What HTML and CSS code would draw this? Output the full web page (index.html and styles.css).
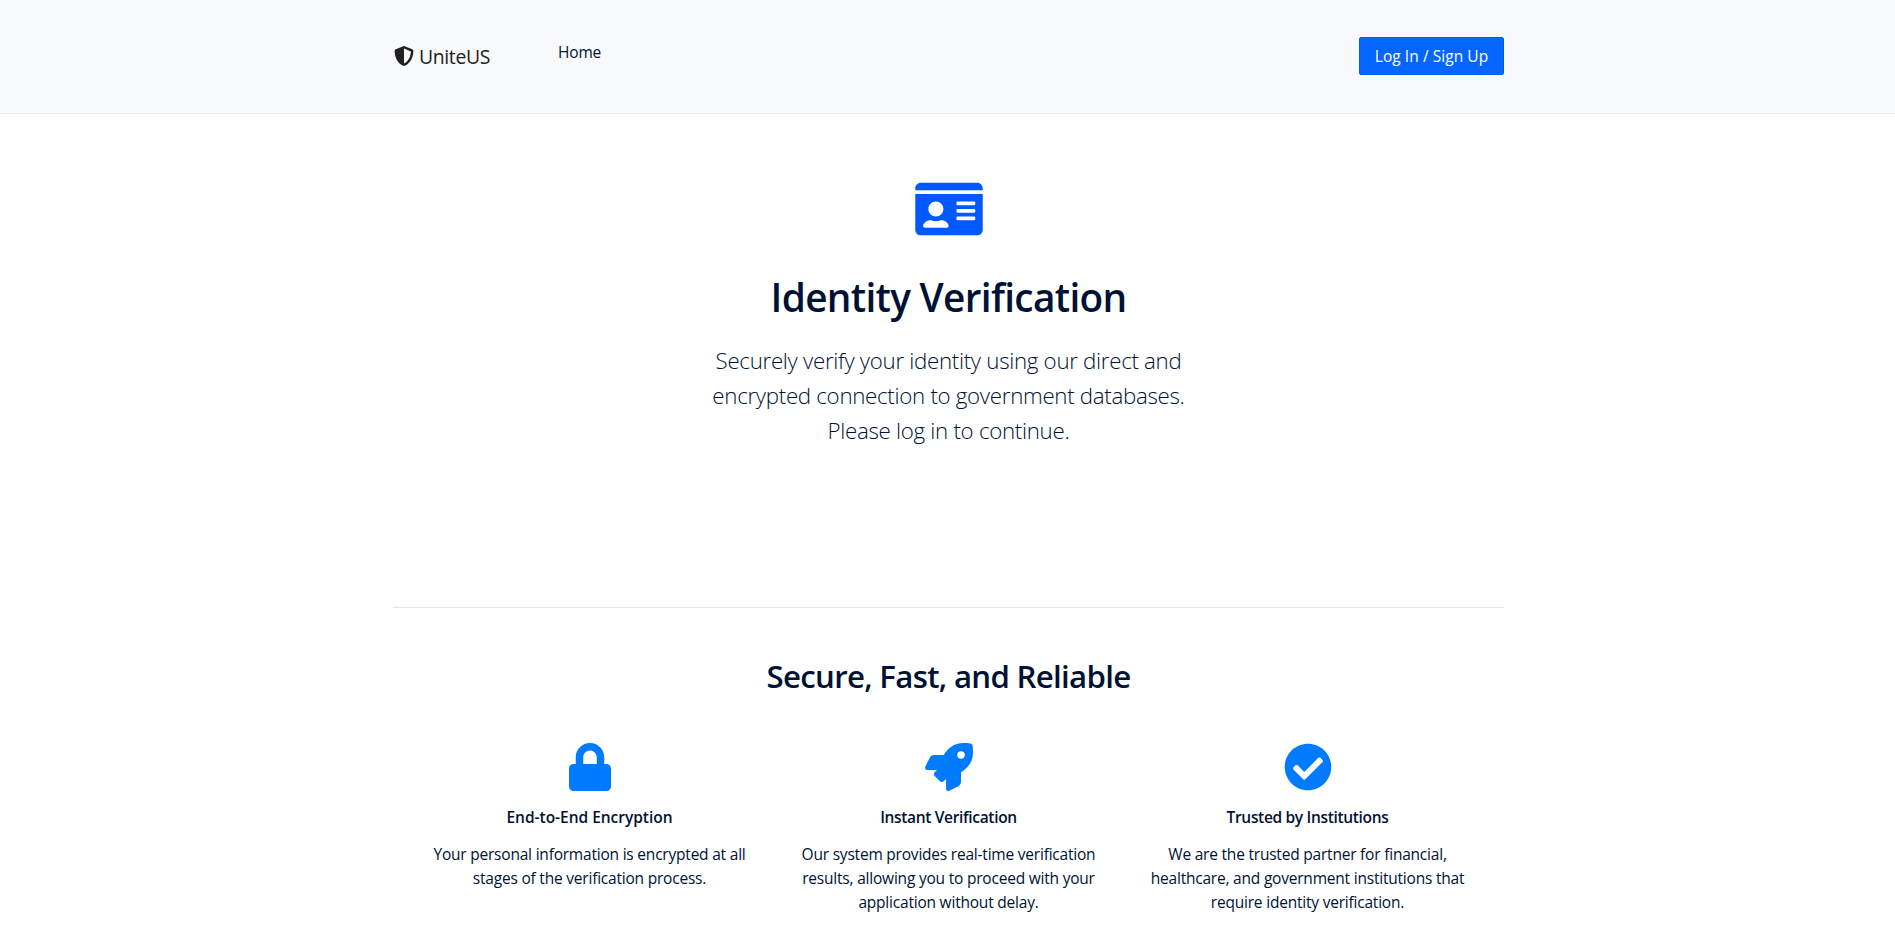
FILE: index.html
```html
<!DOCTYPE html>
<html lang="en">
<head>
    <meta charset="UTF-8">
    <meta name="viewport" content="width=device-width, initial-scale=1.0">
    <title>UniteUS - Identity Verification</title>
    <link rel="stylesheet" href="styles.css">
</head>
<body>
    <!-- Navigation -->
    <header class="header">
        <nav class="container navbar">
            <a class="brand" href="#">
                <svg class="brand-icon" viewBox="0 0 512 512"><path d="M466.5 83.7l-192-80a48.15 48.15 0 0 0-36.9 0l-192 80C27.7 91.1 16 108.6 16 128c0 198.5 114.5 335.7 221.5 380.3 11.8 4.9 25.1 4.9 36.9 0C360.1 472.6 496 349.3 496 128c0-19.4-11.7-36.9-29.5-44.3zM256.1 446.3l-.1-381 175.9 73.3c-3.3 151.4-82.1 261.1-175.8 307.7z"/></svg>
                <span class="brand-name">UniteUS</span>
            </a>
            <a class="nav-link" href="#">Home</a>
            <a class="btn-login" href="#">Log In / Sign Up</a>
        </nav>
    </header>

    <main class="container">
        <!-- Hero -->
        <section class="hero">
            <svg class="hero-icon" viewBox="0 0 576 512"><path d="M528 32H48C21.5 32 0 53.5 0 80v16h576V80c0-26.5-21.5-48-48-48zM0 432c0 26.5 21.5 48 48 48h480c26.5 0 48-21.5 48-48V128H0v304zm352-232c0-4.4 3.6-8 8-8h144c4.4 0 8 3.6 8 8v16c0 4.4-3.6 8-8 8H360c-4.4 0-8-3.6-8-8v-16zm0 64c0-4.4 3.6-8 8-8h144c4.4 0 8 3.6 8 8v16c0 4.4-3.6 8-8 8H360c-4.4 0-8-3.6-8-8v-16zm0 64c0-4.4 3.6-8 8-8h144c4.4 0 8 3.6 8 8v16c0 4.4-3.6 8-8 8H360c-4.4 0-8-3.6-8-8v-16zM176 192c35.3 0 64 28.7 64 64s-28.7 64-64 64-64-28.7-64-64 28.7-64 64-64zM67.1 396.2C75.5 370.5 99.6 352 128 352h8.2c12.3 5.1 25.7 8 39.8 8s27.6-2.9 39.8-8h8.2c28.4 0 52.5 18.5 60.9 44.2 3.2 9.9-5.2 19.8-15.6 19.8H82.7c-10.4 0-18.8-10-15.6-19.8z"/></svg>
            <h1>Identity Verification</h1>
            <p class="lead">
                Securely verify your identity using our direct and<br>
                encrypted connection to government databases.<br>
                Please log in to continue.
            </p>
        </section>

        <!-- Features -->
        <section class="features">
            <h2>Secure, Fast, and Reliable</h2>
            <div class="feature-row">
                <div class="feature">
                    <svg class="feature-icon" viewBox="0 0 448 512"><path d="M400 224h-24v-72C376 68.2 307.8 0 224 0S72 68.2 72 152v72H48c-26.5 0-48 21.5-48 48v192c0 26.5 21.5 48 48 48h352c26.5 0 48-21.5 48-48V272c0-26.5-21.5-48-48-48zm-104 0H152v-72c0-39.7 32.3-72 72-72s72 32.3 72 72v72z"/></svg>
                    <h5 class="wide">End-to-End Encryption</h5>
                    <p>Your personal information is encrypted at all<br>stages of the verification process.</p>
                </div>
                <div class="feature">
                    <svg class="feature-icon" viewBox="0 0 512 512"><path d="M505.12 19.094c-1.189-5.531-6.658-11-12.207-12.188C460.716 0 435.507 0 410.407 0 307.175 0 245.269 55.203 199.052 128H94.838c-16.348.016-35.557 11.875-42.887 26.484L2.516 253.297A28.4 28.4 0 0 0 0 264a24.008 24.008 0 0 0 24.006 24h103.846l-22.475 22.469c-11.365 11.361-12.996 32.258 0 45.25l50.904 50.906c11.156 11.188 32.22 13.156 45.277 0L224 384.156V488a24.008 24.008 0 0 0 24 24 28.559 28.559 0 0 0 10.707-2.516l98.728-49.39c14.629-7.297 26.508-26.5 26.508-42.86V312.797c72.594-46.313 128.036-108.406 128.036-211.094.078-25.203.078-50.406-6.859-82.609zM384.04 168a40 40 0 1 1 40-40 40.023 40.023 0 0 1-40 40z"/></svg>
                    <h5>Instant Verification</h5>
                    <p>Our system provides real-time verification<br>results, allowing you to proceed with your<br>application without delay.</p>
                </div>
                <div class="feature">
                    <svg class="feature-icon" viewBox="0 0 512 512"><path d="M504 256c0 136.967-111.033 248-248 248S8 392.967 8 256 119.033 8 256 8s248 111.033 248 248zM227.314 387.314l184-184c6.248-6.248 6.248-16.379 0-22.627l-22.627-22.627c-6.248-6.249-16.379-6.249-22.628 0L216 308.118l-70.059-70.059c-6.248-6.248-16.379-6.248-22.628 0l-22.627 22.627c-6.248 6.248-6.248 16.379 0 22.627l104 104c6.249 6.249 16.379 6.249 22.628.001z"/></svg>
                    <h5>Trusted by Institutions</h5>
                    <p>We are the trusted partner for financial,<br>healthcare, and government institutions that<br>require identity verification.</p>
                </div>
            </div>
        </section>
    </main>
</body>
</html>
```
FILE: styles.css
```css
* {
    box-sizing: border-box;
}

body {
    font-family: "Segoe UI", "Open Sans", sans-serif;
    font-size: 15.5px;
    line-height: 24px;
    color: #001233;
    background-color: #fff;
    margin: 0;
    overflow: hidden;
}

a {
    color: inherit;
    text-decoration: none;
}

svg {
    display: block;
    fill: currentColor;
}

.container {
    width: 1111px;
    margin: 0 391px 0 393px;
}

/* Header styling */
.header {
    background-color: #f8f9fb;
    border-bottom: 1px solid #e6e8eb;
    height: 114px;
}

.navbar {
    display: flex;
    align-items: flex-start;
    padding-top: 37px;
}

.brand {
    display: flex;
    align-items: center;
    height: 38px;
    font-size: 19.4px;
    letter-spacing: -0.35px;
    color: #212121;
}

.brand-icon {
    width: 20px;
    height: 20px;
    margin-left: 0.5px;
    margin-right: 5.5px;
}

.brand-name {
    padding-top: 1px;
}

.nav-link {
    margin-left: 68px;
    padding-top: 3px;
    letter-spacing: -0.2px;
}

.btn-login {
    width: 145px;
    height: 38px;
    margin-left: auto;
    border: 1px solid #005fe5;
    border-radius: 2px;
    background-color: #0466ff;
    color: #fff;
    text-align: center;
    line-height: 37px;
    letter-spacing: 0.05px;
}

/* Hero */
.hero {
    height: 494px;
    padding-top: 65px;
    border-bottom: 1px solid #e5e5e5;
    text-align: center;
}

.hero-icon {
    width: 68px;
    height: 60px;
    margin: 0 auto;
    color: #0059ff;
}

.hero h1 {
    margin: 34px 0 0;
    font-size: 38.8px;
    font-weight: 600;
    line-height: 48px;
    letter-spacing: -0.7px;
}

.lead {
    margin: 22px 0 0;
    font-size: 22.3px;
    font-weight: 300;
    line-height: 35px;
    letter-spacing: -0.3px;
}

/* Features */
.features {
    padding: 49px 17px 0;
    text-align: center;
}

.features h2 {
    margin: 0;
    font-size: 31.2px;
    font-weight: 600;
    line-height: 39px;
    letter-spacing: -0.7px;
}

.feature-row {
    display: grid;
    grid-template-columns: repeat(3, 1fr);
    margin-top: 47px;
}

.feature-icon {
    height: 48px;
    margin: 0 auto;
    color: #007bff;
}

.feature h5 {
    margin: 14px 0 0;
    font-size: 15.5px;
    font-weight: 600;
    line-height: 24px;
    letter-spacing: -0.33px;
}

.feature h5.wide {
    letter-spacing: -0.02px;
}

.feature p {
    margin: 13px 0 0;
    letter-spacing: -0.21px;
}
```
